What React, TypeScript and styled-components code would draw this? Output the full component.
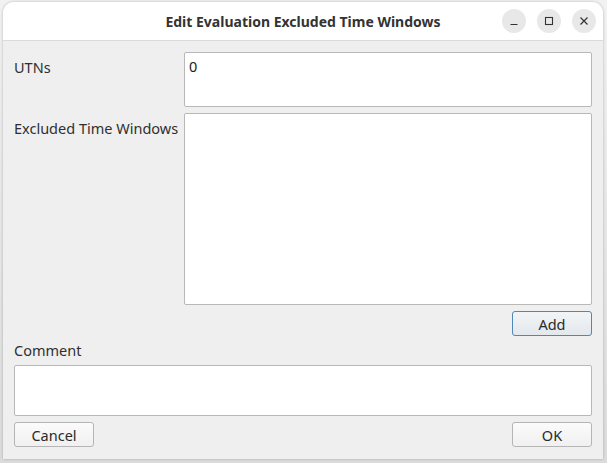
import React from "react";
import styled, { createGlobalStyle } from "styled-components";

const Global = createGlobalStyle`
  html, body { margin: 0; padding: 0; background: #e6e6e6; }
  body { width: 607px; height: 463px; overflow: hidden; font-family: "Noto Sans", "DejaVu Sans", sans-serif; }
`;

const Frame = styled.div`
  width: 607px;
  height: 463px;
  box-sizing: border-box;
  padding: 2px 4px 4px 3px;
  background: linear-gradient(#f2f2f2, #dcdcdc);
`;

const Window = styled.div`
  width: 600px;
  height: 457px;
  display: flex;
  flex-direction: column;
  background: #efefef;
  border-radius: 11px 11px 0 0;
  box-shadow: 0 0 3px rgba(0, 0, 0, 0.25);
  overflow: hidden;
`;

const TitleBar = styled.div`
  height: 38px;
  flex: 0 0 38px;
  background: #ffffff;
  border-bottom: 1px solid #dadada;
  display: grid;
  grid-template-columns: 1fr auto 1fr;
  align-items: center;
`;

const Title = styled.div`
  grid-column: 2;
  font-weight: 700;
  font-size: 14px;
  color: #333333;
`;

const Controls = styled.div`
  grid-column: 3;
  justify-self: end;
  display: flex;
  gap: 11px;
  padding-right: 7px;
`;

const Circle = styled.div`
  width: 24px;
  height: 24px;
  border-radius: 50%;
  background: #e8e8e8;
  display: flex;
  align-items: center;
  justify-content: center;
`;

const Body = styled.div`
  flex: 1;
  display: flex;
  flex-direction: column;
  padding: 11px 11px 0 11px;
`;

const FormRow = styled.div<{ $h: number }>`
  display: grid;
  grid-template-columns: 170px 1fr;
  height: ${(p) => p.$h}px;
  margin-bottom: 6px;
`;

const Label = styled.div`
  font-size: 14.5px;
  line-height: 18px;
  color: #2f2f2f;
  padding-top: 6px;
`;

const Field = styled.div`
  background: #ffffff;
  border: 1px solid #b8b8b8;
  border-radius: 2px;
  font-size: 14.5px;
  line-height: 18px;
  color: #202020;
  padding: 4px 4px;
  box-sizing: border-box;
`;

const ButtonRow = styled.div`
  display: flex;
  justify-content: space-between;
`;

const Button = styled.button<{ $focus?: boolean }>`
  width: 80px;
  height: 25px;
  box-sizing: border-box;
  font-family: "Noto Sans", "DejaVu Sans", sans-serif;
  font-size: 14.5px;
  line-height: 18px;
  color: #2a2a2a;
  border-radius: 3px;
  border: 1px solid ${(p) => (p.$focus ? "#4f87b8" : "#b5b5b5")};
  background: ${(p) => (p.$focus ? "linear-gradient(#f2f5f8, #e3e8ec)" : "linear-gradient(#fbfbfb, #f0f0f0)")};
  padding: 0;
`;

const Spacer = styled.div``;

const CommentLabel = styled.div`
  font-size: 14.5px;
  line-height: 18px;
  color: #2f2f2f;
  padding-top: 5px;
  height: 29px;
  box-sizing: border-box;
`;

const CommentField = styled(Field)`
  height: 51px;
  margin-bottom: 6px;
`;

export default function App() {
  return (
    <>
      <Global />
      <Frame>
        <Window>
          <TitleBar>
            <Title>Edit Evaluation Excluded Time Windows</Title>
            <Controls>
              <Circle>
                <svg width="10" height="10" viewBox="0 0 10 10">
                  <path d="M1.5 8.5h7" stroke="#333" strokeWidth="1.2" />
                </svg>
              </Circle>
              <Circle>
                <svg width="10" height="10" viewBox="0 0 10 10">
                  <rect x="1.5" y="1.5" width="7" height="7" fill="none" stroke="#333" strokeWidth="1.1" />
                </svg>
              </Circle>
              <Circle>
                <svg width="10" height="10" viewBox="0 0 10 10">
                  <path d="M1.5 1.5l7 7M8.5 1.5l-7 7" stroke="#333" strokeWidth="1.2" />
                </svg>
              </Circle>
            </Controls>
          </TitleBar>
          <Body>
            <FormRow $h={55}>
              <Label>UTNs</Label>
              <Field>0</Field>
            </FormRow>
            <FormRow $h={192}>
              <Label>Excluded Time Windows</Label>
              <Field />
            </FormRow>
            <ButtonRow>
              <Spacer />
              <Button $focus>Add</Button>
            </ButtonRow>
            <CommentLabel>Comment</CommentLabel>
            <CommentField />
            <ButtonRow>
              <Button>Cancel</Button>
              <Button>OK</Button>
            </ButtonRow>
          </Body>
        </Window>
      </Frame>
    </>
  );
}
